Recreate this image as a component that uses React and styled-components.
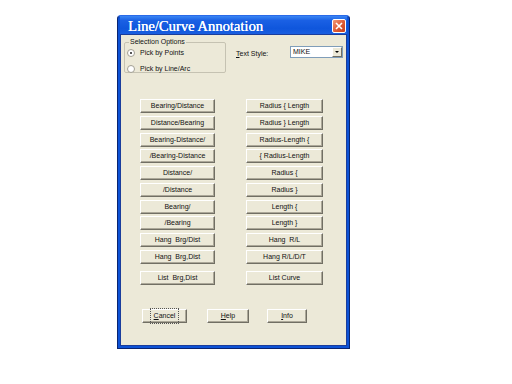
import React from "react";
import styled, { createGlobalStyle } from "styled-components";

const Global = createGlobalStyle`
  html, body { margin: 0; padding: 0; background: #ffffff; }
  body { font-family: "Liberation Sans", Arial, sans-serif; }
`;

const Page = styled.div`
  width: 512px;
  height: 384px;
  box-sizing: border-box;
  padding: 15px 0 0 117px;
  background: #ffffff;
`;

const Window = styled.div`
  width: 233px;
  height: 334px;
  box-sizing: border-box;
  display: flex;
  flex-direction: column;
  background: #0d52d6;
  border: 1px solid #0a2470;
  border-top-color: #2a6ae8;
  padding: 0 2px 2px 2px;
  border-radius: 4px 4px 0 0;
`;

const TitleBar = styled.div`
  height: 18px;
  flex: none;
  display: flex;
  align-items: center;
  justify-content: space-between;
  padding: 0 1px 0 8px;
  background: linear-gradient(180deg, #3a86f4 0%, #1a60e4 25%, #0f56dc 70%, #1a5fe0 100%);
`;

const Title = styled.span`
  font-family: "Liberation Serif", "Times New Roman", serif;
  font-size: 14.6px;
  color: #ffffff;
  line-height: 18px;
  margin-top: 1px;
  text-shadow: 0.3px 0 0 #ffffff;
`;

const CloseBox = styled.div`
  width: 12px;
  height: 12px;
  margin-top: 2px;
  border: 1px solid #ffffff;
  border-radius: 2px;
  background: linear-gradient(135deg, #f09a78 0%, #de5a34 55%, #c8401c 100%);
  display: flex;
  align-items: center;
  justify-content: center;
`;

const Client = styled.div`
  flex: 1;
  display: flex;
  flex-direction: column;
  background: #ece9d8;
  border: 1px solid #1a3d9c;
  font-family: "Liberation Sans", Arial, sans-serif;
  font-size: 7px;
  color: #111111;
`;

const TopRow = styled.div`
  display: flex;
  align-items: flex-start;
  padding: 3px 0 0 3px;
  height: 38px;
`;

const Group = styled.fieldset`
  margin: 0;
  width: 102px;
  height: 35px;
  box-sizing: border-box;
  border: 1px solid #c5c2b2;
  border-radius: 2px;
  padding: 2px 0 0 2px;
  display: flex;
  flex-direction: column;
  gap: 7px;
`;

const Legend = styled.legend`
  padding: 0 1px;
  margin-left: 2px;
  font-size: 7px;
  line-height: 8px;
  color: #111111;
`;

const RadioRow = styled.div`
  display: flex;
  align-items: center;
  gap: 5px;
  height: 9px;
  line-height: 9px;
`;

const RadioDot = styled.span`
  width: 6px;
  height: 6px;
  border-radius: 50%;
  border: 1px solid #a29f93;
  background: #ffffff;
  display: flex;
  align-items: center;
  justify-content: center;
  &::after {
    content: "";
    width: 2px;
    height: 2px;
    border-radius: 50%;
    background: ${(p) => (p.$on ? "#1e1e1e" : "transparent")};
  }
`;

const StyleLabel = styled.span`
  margin: 11px 0 0 10px;
  width: 54px;
  line-height: 9px;
`;

const Combo = styled.div`
  margin-top: 8px;
  width: 53px;
  height: 12px;
  box-sizing: border-box;
  border: 1px solid #7f9db9;
  background: #ffffff;
  display: flex;
  align-items: stretch;
`;

const ComboText = styled.span`
  flex: 1;
  padding-left: 2px;
  line-height: 10px;
  font-size: 7px;
`;

const ComboArrow = styled.span`
  width: 10px;
  box-sizing: border-box;
  background: #ece9d8;
  border-left: 1px solid #ffffff;
  border-top: 1px solid #ffffff;
  border-right: 1px solid #716f64;
  border-bottom: 1px solid #716f64;
  display: flex;
  align-items: center;
  justify-content: center;
  &::after {
    content: "";
    border-left: 2px solid transparent;
    border-right: 2px solid transparent;
    border-top: 2px solid #000000;
  }
`;

const Grid = styled.div`
  display: grid;
  grid-template-columns: 75px 77px;
  column-gap: 31px;
  row-gap: 2.75px;
  padding-left: 19px;
  margin-top: ${(p) => p.$top}px;
`;

const Btn = styled.div`
  height: 14px;
  width: ${(p) => (p.$w ? `${p.$w}px` : "auto")};
  box-sizing: border-box;
  background: #ece9d8;
  border-top: 1px solid #ffffff;
  border-left: 1px solid #ffffff;
  border-right: 1px solid #716f64;
  border-bottom: 1px solid #716f64;
  box-shadow: inset -1px -1px 0 #aca899;
  display: flex;
  align-items: center;
  justify-content: center;
  font-size: 7px;
  line-height: 12px;
  white-space: pre;
  color: #111111;
`;

const FocusText = styled.span`
  outline: ${(p) => (p.$focus ? "1px dotted #555" : "none")};
  outline-offset: 1px;
  padding: 0 2px;
`;

const U = styled.span`
  text-decoration: underline;
`;

const BottomRow = styled.div`
  display: flex;
  padding-left: 21px;
  margin-top: 24px;
`;

const Spacer = styled.span`
  width: ${(p) => p.$w}px;
  flex: none;
`;

const left = [
  "Bearing/Distance",
  "Distance/Bearing",
  "Bearing-Distance/",
  "/Bearing-Distance",
  "Distance/",
  "/Distance",
  "Bearing/",
  "/Bearing",
  "Hang  Brg/Dist",
  "Hang  Brg,Dist",
];
const right = [
  "Radius { Length",
  "Radius } Length",
  "Radius-Length {",
  "{ Radius-Length",
  "Radius {",
  "Radius }",
  "Length {",
  "Length }",
  "Hang  R/L",
  "Hang R/L/D/T",
];

export default function App() {
  return (
    <Page>
      <Global />
      <Window>
        <TitleBar>
          <Title>Line/Curve Annotation</Title>
          <CloseBox>
            <svg width="8" height="8" viewBox="0 0 8 8">
              <path d="M1 1 L7 7 M7 1 L1 7" stroke="#ffffff" strokeWidth="1.6" />
            </svg>
          </CloseBox>
        </TitleBar>
        <Client>
          <TopRow>
            <Group>
              <Legend>Selection Options</Legend>
              <RadioRow>
                <RadioDot $on />
                <span>Pick by Points</span>
              </RadioRow>
              <RadioRow>
                <RadioDot />
                <span>Pick by Line/Arc</span>
              </RadioRow>
            </Group>
            <StyleLabel>
              <U>T</U>ext Style:
            </StyleLabel>
            <Combo>
              <ComboText>MIKE</ComboText>
              <ComboArrow />
            </Combo>
          </TopRow>
          <Grid $top={23}>
            {left.map((l, i) => (
              <React.Fragment key={l}>
                <Btn>{l}</Btn>
                <Btn>{right[i]}</Btn>
              </React.Fragment>
            ))}
          </Grid>
          <Grid $top={7}>
            <Btn>List  Brg,Dist</Btn>
            <Btn>List Curve</Btn>
          </Grid>
          <BottomRow>
            <Btn $w={45}>
              <FocusText $focus>
                <U>C</U>ancel
              </FocusText>
            </Btn>
            <Spacer $w={20} />
            <Btn $w={42}>
              <span>
                <U>H</U>elp
              </span>
            </Btn>
            <Spacer $w={18} />
            <Btn $w={40}>
              <span>
                <U>I</U>nfo
              </span>
            </Btn>
          </BottomRow>
        </Client>
      </Window>
    </Page>
  );
}
